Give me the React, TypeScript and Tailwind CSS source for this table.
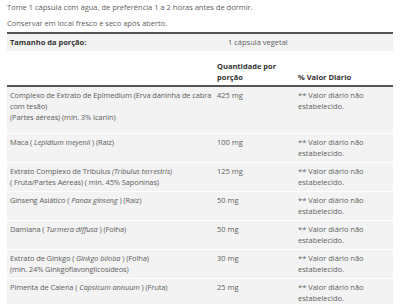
const rows: { name: React.ReactNode; amount: string }[] = [
  {
    name: (
      <>
        Complexo de Extrato de Epimedium (Erva daninha de cabra
        <br />
        com tesão)
        <br />
        (Partes aéreas) (mín. 3% Icariin)
      </>
    ),
    amount: "425 mg",
  },
  {
    name: (
      <>
        Maca ( <i>Lepidium meyenii</i> ) (Raiz)
      </>
    ),
    amount: "100 mg",
  },
  {
    name: (
      <>
        Extrato Complexo de Tribulus <i>(Tribulus terrestris)</i>
        <br />( Fruta/Partes Aéreas) ( min. 45% Saponinas)
      </>
    ),
    amount: "125 mg",
  },
  {
    name: (
      <>
        Ginseng Asiático ( <i>Panax ginseng</i> ) (Raiz)
      </>
    ),
    amount: "50 mg",
  },
  {
    name: (
      <>
        Damiana ( <i>Turmera diffusa</i> ) (Folha)
      </>
    ),
    amount: "50 mg",
  },
  {
    name: (
      <>
        Extrato de Ginkgo ( <i>Ginkgo biloba</i> ) (Folha)
        <br />
        (min. 24% Ginkgoflavonglicosídeos)
      </>
    ),
    amount: "30 mg",
  },
  {
    name: (
      <>
        Pimenta de Caiena ( <i>Capsicum annuum</i> ) (Fruta)
      </>
    ),
    amount: "25 mg",
  },
];

const App = () => {
  return (
    <div
      className="w-[400px] h-[304px] overflow-hidden bg-white px-[7px] text-[7.5px] leading-[11px] text-[#606060]"
      style={{ fontFamily: '"Open Sans", sans-serif' }}
    >
      <p className="pt-[2px]">
        Tome 1 cápsula com água, de preferência 1 a 2 horas antes de dormir.
      </p>
      <p className="mt-[5px]">Conservar em local fresco e seco após aberto.</p>

      <div className="mt-[3px] border-t-2 border-[#555]">
        <div className="flex bg-[#f3f3f3] h-[17px] items-center">
          <div className="w-[221px] pl-[3px] font-bold text-[#333]">
            Tamanho da porção:
          </div>
          <div>1 cápsula vegetal</div>
        </div>
        <div className="grid grid-cols-[207px_81px_98px] h-[36px] items-end pb-[2px] font-bold text-[#333] border-b-2 border-[#555]">
          <div />
          <div className="pl-[3px]">
            Quantidade por
            <br />
            porção
          </div>
          <div className="pl-[3px]">% Valor Diário</div>
        </div>

        {rows.map((row, i) => (
          <div
            key={i}
            className={
              i === 0
                ? "grid grid-cols-[207px_81px_98px] bg-[#f3f3f3] border-b border-white pt-[3px] pb-[10px]"
                : "grid grid-cols-[207px_81px_98px] bg-[#f3f3f3] border-b border-white py-[3px]"
            }
          >
            <div className="pl-[3px] whitespace-nowrap tracking-[-0.12px]">
              {row.name}
            </div>
            <div className="pl-[3px]">{row.amount}</div>
            <div className="pl-[3px]">
              ** Valor diário não
              <br />
              estabelecido.
            </div>
          </div>
        ))}
      </div>
    </div>
  );
};

export default App;
